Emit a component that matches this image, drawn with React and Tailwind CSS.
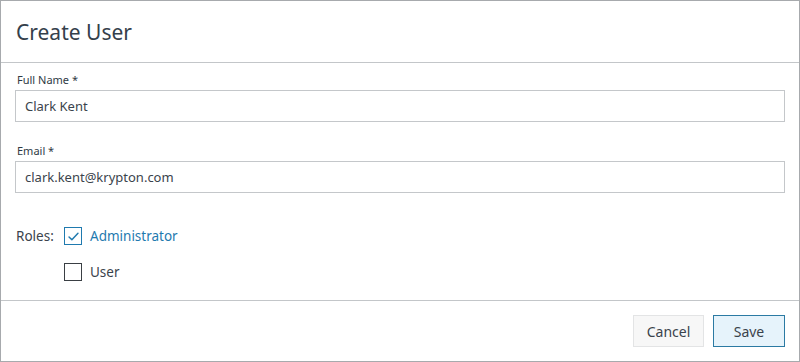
import React, { useState } from 'react';

const Checkbox = ({ checked, onChange }) => (
  <button
    type="button"
    onClick={onChange}
    className={`flex h-[18px] w-[18px] items-center justify-center border bg-white ${
      checked ? 'border-[#1f7aaf]' : 'border-[#3a3f44]'
    }`}
  >
    {checked && (
      <svg viewBox="0 0 16 16" className="h-[13px] w-[13px]" fill="none">
        <path d="M2.5 8.5l3.5 3.5 7.5-8" stroke="#1f7aaf" strokeWidth="1.8" strokeLinecap="round" strokeLinejoin="round" />
      </svg>
    )}
  </button>
);

export default function App() {
  const [name, setName] = useState('Clark Kent');
  const [email, setEmail] = useState('clark.kent@krypton.com');
  const [roles, setRoles] = useState({ admin: true, user: false });

  return (
    <div className="flex h-[362px] w-[800px] flex-col border border-[#a7aaad] bg-white font-['Noto_Sans',sans-serif] text-[#2f3a44]">
      {/* Header */}
      <div className="h-[62px] shrink-0 border-b border-[#c3c6c9] px-[15px] pt-[16px]">
        <h1 className="text-[21px] leading-[30px] text-[#34404b]">Create User</h1>
      </div>

      {/* Body */}
      <div className="flex-1 px-[14px] pt-[9px]">
        <label className="block pl-[2px] text-[11px] leading-[16px] text-[#2f3a44]">Full Name *</label>
        <input
          value={name}
          onChange={(e) => setName(e.target.value)}
          className="mt-[2px] h-[32px] w-full border border-[#c4c7ca] px-[9px] text-[13px] text-[#3a434c] outline-none"
        />

        <label className="mt-[21px] block pl-[2px] text-[11px] leading-[16px] text-[#2f3a44]">Email *</label>
        <input
          value={email}
          onChange={(e) => setEmail(e.target.value)}
          className="mt-[2px] h-[32px] w-full border border-[#c4c7ca] px-[9px] text-[13px] text-[#3a434c] outline-none"
        />

        <div className="mt-[33px] flex">
          <span className="w-[49px] pl-[1px] text-[13.5px] leading-[20px] text-[#3a434c]">Roles:</span>
          <div className="flex flex-col gap-[16px]">
            <div className="flex items-center gap-[8px]">
              <Checkbox checked={roles.admin} onChange={() => setRoles({ ...roles, admin: !roles.admin })} />
              <span className="text-[13.5px] leading-[20px] text-[#1f7aaf]">Administrator</span>
            </div>
            <div className="flex items-center gap-[8px]">
              <Checkbox checked={roles.user} onChange={() => setRoles({ ...roles, user: !roles.user })} />
              <span className="text-[13.5px] leading-[20px] text-[#3a434c]">User</span>
            </div>
          </div>
        </div>
      </div>

      {/* Footer */}
      <div className="flex h-[61px] shrink-0 items-center justify-end gap-[9px] border-t border-[#c3c6c9] px-[14px]">
        <button className="h-[32px] w-[71px] border border-[#e3e4e5] bg-[#f7f7f7] text-[14px] text-[#3a434c]">Cancel</button>
        <button className="h-[32px] w-[72px] border border-[#2b7aa3] bg-[#e6f3fb] text-[14px] text-[#3a434c]">Save</button>
      </div>
    </div>
  );
}
